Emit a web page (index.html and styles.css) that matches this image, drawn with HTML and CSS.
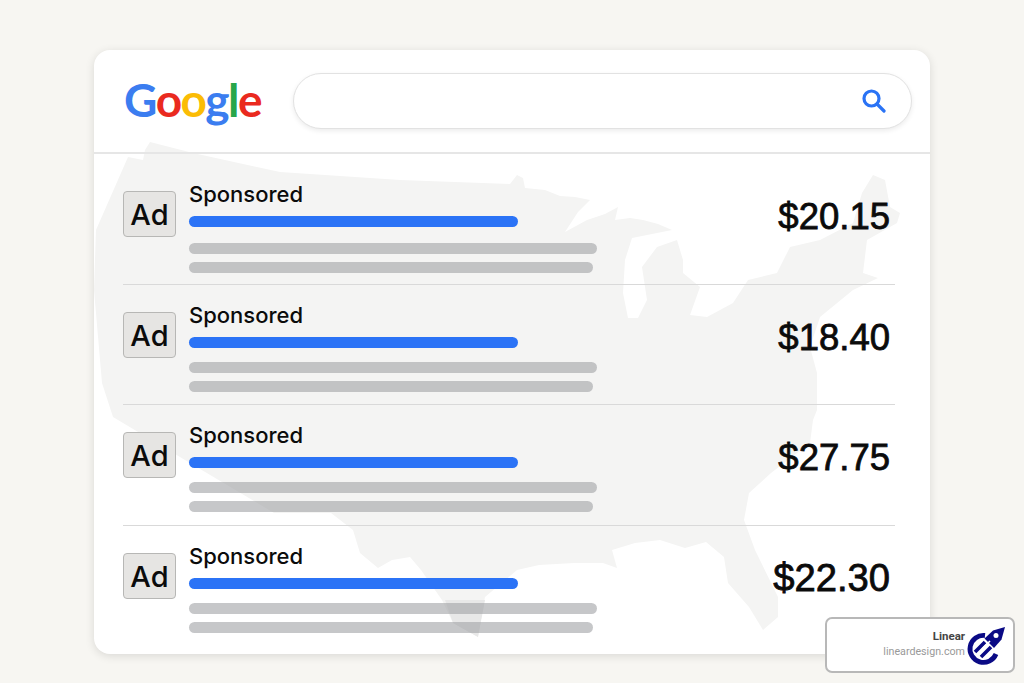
FILE: index.html
```html
<!DOCTYPE html>
<html lang="en">
<head>
<meta charset="utf-8">
<title>Sponsored results</title>
<link rel="stylesheet" href="styles.css">
</head>
<body>
<main class="card">
  <svg class="map" viewBox="0 0 836 604" aria-hidden="true">
    <g transform="translate(-94 -50)">
      <path class="land" d="M128 157L143 160L145 150L150 142L193 153L280 172L400 180L510 184L517 175L523 178L525 188L545 190L560 196L575 197L590 200L578 212L565 232L587 220L605 214L618 207L615 220L630 218L643 220L658 224L672 230L657 233L632 238L625 260L623 293L628 318L638 318L647 300L642 267L657 247L677 240L683 260L683 273L700 287L690 315L707 317L733 303L748 280L777 273L790 247L820 240L853 223L862 193L873 175L885 180L890 207L900 213L897 223L867 240L863 273L878 278L853 290L820 317L810 347L817 373L817 410L813 420L810 443L771 473L749 493L744 520L755 550L778 597L778 617L763 630L749 607L728 583L724 557L706 542L685 548L660 540L635 543L612 550L617 568L603 563L574 563L539 565L517 570L485 597L478 637L453 623L442 600L421 570L410 557L392 560L378 568L360 553L353 530L331 513L274 513L190 463L113 417L102 383L94 290L96 230Z"/>
      <path class="tip" d="M445 600L485 600L478 637L453 623Z"/>
    </g>
  </svg>
  <header class="top">
    <div class="logo"><span class="blue">G</span><span class="red">o</span><span class="yellow">o</span><span class="blue">g</span><span class="green">l</span><span class="red">e</span></div>
    <div class="search">
      <svg class="search-icon" viewBox="0 0 24 24" aria-hidden="true"><circle cx="9.5" cy="9.5" r="7.5"/><path d="M15 15L22 22"/></svg>
    </div>
  </header>
  <section class="list">
    <article class="row row-first">
      <div class="ad">Ad</div>
      <div class="body">
        <div class="label">Sponsored</div>
        <div class="bar bar-blue"></div>
        <div class="bar bar-gray bar-long"></div>
        <div class="bar bar-gray bar-short"></div>
      </div>
      <div class="price">$20.15</div>
    </article>
    <article class="row row-second">
      <div class="ad">Ad</div>
      <div class="body">
        <div class="label">Sponsored</div>
        <div class="bar bar-blue"></div>
        <div class="bar bar-gray bar-long"></div>
        <div class="bar bar-gray bar-short"></div>
      </div>
      <div class="price">$18.40</div>
    </article>
    <article class="row row-third">
      <div class="ad">Ad</div>
      <div class="body">
        <div class="label">Sponsored</div>
        <div class="bar bar-blue"></div>
        <div class="bar bar-gray bar-long"></div>
        <div class="bar bar-gray bar-short"></div>
      </div>
      <div class="price">$27.75</div>
    </article>
    <article class="row row-last">
      <div class="ad">Ad</div>
      <div class="body">
        <div class="label">Sponsored</div>
        <div class="bar bar-blue"></div>
        <div class="bar bar-gray bar-long"></div>
        <div class="bar bar-gray bar-short"></div>
      </div>
      <div class="price price-wide">$22.30</div>
    </article>
  </section>
</main>
<aside class="brand">
  <div class="brand-text">
    <div class="brand-name">Linear</div>
    <div class="brand-url">lineardesign.com</div>
  </div>
  <svg class="brand-logo" viewBox="0 0 44 42" aria-hidden="true">
    <path class="rocket-ring" d="M21 11.500A13.500 13.500 0 1 0 32 30"/>
    <path class="rocket-stripe" d="M11 28L21 18M17 33L27 23"/>
    <path class="rocket-body" d="M41 3L29 6.500L20.500 14.500L30 24L37.500 15.500Z"/>
    <circle class="rocket-window" cx="32" cy="11.500" r="2.500"/>
    <path class="rocket-gap" d="M18 25L26 17"/>
  </svg>
</aside>
</body>
</html>
```
FILE: styles.css
```css
* { box-sizing: border-box; }
html, body { margin: 0; height: 683px; overflow: hidden; }
body {
  background: #f7f6f2;
  padding: 50px 94px 0;
  font-family: "Inter", "Liberation Sans", sans-serif;
  color: #0b0b0b;
  position: relative;
}
.card {
  position: relative;
  width: 836px;
  height: 604px;
  background: #fff;
  border-radius: 16px;
  box-shadow: 0 2px 10px rgba(0, 0, 0, .12);
}
.map { position: absolute; left: 0; top: 0; width: 836px; height: 604px; filter: blur(.7px); }
.land { fill: #f4f4f3; }
.tip { fill: #e8e8e8; }
.top {
  position: relative;
  height: 104px;
  display: flex;
  align-items: flex-start;
  padding: 23px 18px 0 30px;
  border-bottom: 2px solid #e6e6e6;
}
.logo {
  width: 169px;
  font-family: "Lato", sans-serif;
  font-size: 46px;
  font-weight: 700;
  line-height: 54px;
  letter-spacing: -1.5px;
  flex: none;
}
.blue { color: #3b7df0; }
.red { color: #ea2a1f; }
.yellow { color: #fbbc05; }
.green { color: #28a64a; }
.search {
  flex: 1;
  height: 56px;
  border: 1px solid #e2e2e2;
  border-radius: 28px;
  background: #fff;
  box-shadow: 0 2px 5px rgba(0, 0, 0, .08);
  display: flex;
  align-items: center;
  justify-content: flex-end;
  padding-right: 25px;
}
.search-icon { width: 24px; height: 24px; fill: none; stroke: #2a73f5; stroke-width: 3.2; stroke-linecap: round; }
.list { position: relative; margin: 0 35px 0 29px; }
.row {
  display: flex;
  align-items: flex-start;
  padding: 18px 5px 0 0;
  border-bottom: 1px solid #d9d9d9;
}
.row-first { height: 131px; padding-top: 28px; }
.row-second { height: 120px; }
.row-third { height: 121px; }
.row-first .bar-long { margin-top: 16px; }
.row-last { border-bottom: 0; height: 128px; }
.ad {
  width: 53px;
  height: 46px;
  margin: 9px 13px 0 0;
  flex: none;
  background: #e6e5e3;
  border: 1px solid #b7b7b5;
  border-radius: 4px;
  display: flex;
  align-items: center;
  justify-content: center;
  font-size: 29px;
  font-weight: 500;
}
.body { flex: 1; }
.label { font-size: 22px; font-weight: 500; line-height: 24px; }
.bar { height: 11px; border-radius: 6px; }
.bar-blue { width: 329px; margin-top: 10px; background: #2b73f6; }
.bar-gray { background: rgba(160, 161, 165, .6); }
.bar-long { width: 408px; margin-top: 14px; }
.bar-short { width: 404px; margin-top: 8px; }
.price {
  margin-top: 15px;
  font-family: "Liberation Sans", sans-serif;
  font-size: 36.500px;
  line-height: 40px;
  text-align: right;
  -webkit-text-stroke: .8px #0b0b0b;
}
.price-wide { font-size: 38.200px; margin-top: 14px; }
.brand {
  position: absolute;
  left: 825px;
  top: 617px;
  width: 190px;
  height: 56px;
  background: #fff;
  border: 2px solid #b8b8b8;
  border-radius: 7px;
  display: flex;
  align-items: center;
  justify-content: flex-end;
  padding-right: 5px;
  font-family: "Roboto", sans-serif;
}
.brand-text { text-align: right; margin-right: -1px; margin-top: -3px; }
.brand-name { font-size: 11.500px; font-weight: 700; color: #444; line-height: 16px; }
.brand-url { font-size: 10.700px; color: #999; line-height: 16px; }
.brand-logo { width: 44px; height: 42px; }
.rocket-ring { fill: none; stroke: #0a0a85; stroke-width: 4.800; }
.rocket-stripe { fill: none; stroke: #0a0a85; stroke-width: 3.600; }
.rocket-body { fill: #0a0a85; }
.rocket-window { fill: #fff; }
.rocket-gap { fill: none; stroke: #fff; stroke-width: 1.600; }
```
